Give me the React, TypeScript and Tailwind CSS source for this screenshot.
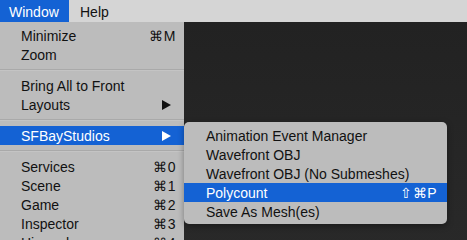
import { Fragment } from 'react'

type Item = { label: string; shortcut?: string; submenu?: boolean; active?: boolean } | 'sep'

const windowItems: Item[] = [
  { label: 'Minimize', shortcut: '⌘M' },
  { label: 'Zoom' },
  'sep',
  { label: 'Bring All to Front' },
  { label: 'Layouts', submenu: true },
  'sep',
  { label: 'SFBayStudios', submenu: true, active: true },
  'sep',
  { label: 'Services', shortcut: '⌘0' },
  { label: 'Scene', shortcut: '⌘1' },
  { label: 'Game', shortcut: '⌘2' },
  { label: 'Inspector', shortcut: '⌘3' },
  { label: 'Hierarchy', shortcut: '⌘4' }
]

const studioItems: Item[] = [
  { label: 'Animation Event Manager' },
  { label: 'Wavefront OBJ' },
  { label: 'Wavefront OBJ (No Submeshes)' },
  { label: 'Polycount', shortcut: '⇧⌘P', active: true },
  { label: 'Save As Mesh(es)' }
]

function MenuRow({ item, padLeft, padRight }: { item: Exclude<Item, 'sep'>; padLeft: string; padRight: string }) {
  return (
    <div
      className={`flex h-[19px] items-center justify-between pt-[2px] ${padLeft} ${padRight} ${
        item.active ? 'bg-[#1462d4] text-white' : 'text-[#111111]'
      }`}
    >
      <span>{item.label}</span>
      {item.shortcut && <span className="tracking-[0.5px]">{item.shortcut}</span>}
      {item.submenu && (
        <svg width="9" height="10" viewBox="0 0 9 10" className="mb-[2px] mr-[5px]">
          <path d="M0 0 L9 5 L0 10 Z" fill="currentColor" />
        </svg>
      )}
    </div>
  )
}

export default function App() {
  return (
    <div
      className="relative flex h-[240px] w-[467px] flex-col overflow-hidden text-[14px] leading-[19px]"
      style={{ fontFamily: '"Liberation Sans", Arial, sans-serif' }}
    >
      <div className="flex h-[22px] items-center bg-[#d5d5d5] pt-[2px] text-[#111111]">
        <div className="-mt-[2px] flex h-[22px] w-[69px] items-center bg-[#1462d4] pl-[9px] pt-[2px] text-white">
          Window
        </div>
        <div className="pl-[11px]">Help</div>
      </div>
      <div className="flex flex-1">
        <div className="w-[184px] bg-[#bcbcbc] pt-[4px]">
          {windowItems.map((item, i) =>
            item === 'sep' ? (
              <div key={i} className="flex h-[12px] items-center">
                <div className="h-[2px] w-full border-b border-[#c4c4c4] bg-[#a9a9a9]" />
              </div>
            ) : (
              <MenuRow key={i} item={item} padLeft="pl-[21px]" padRight="pr-[8px]" />
            )
          )}
        </div>
        <div className="flex-1 bg-gradient-to-b from-[#222222] to-[#292929]" />
      </div>
      <div className="absolute left-[184px] top-[122px] w-[263px] overflow-hidden rounded-[5px] bg-[#bcbcbc] pb-[3px] pt-[4px] shadow-[0_2px_6px_rgba(0,0,0,0.35)]">
        {studioItems.map((item, i) => (
          <Fragment key={i}>
            {item !== 'sep' && <MenuRow item={item} padLeft="pl-[22px]" padRight="pr-[10px]" />}
          </Fragment>
        ))}
      </div>
    </div>
  )
}
